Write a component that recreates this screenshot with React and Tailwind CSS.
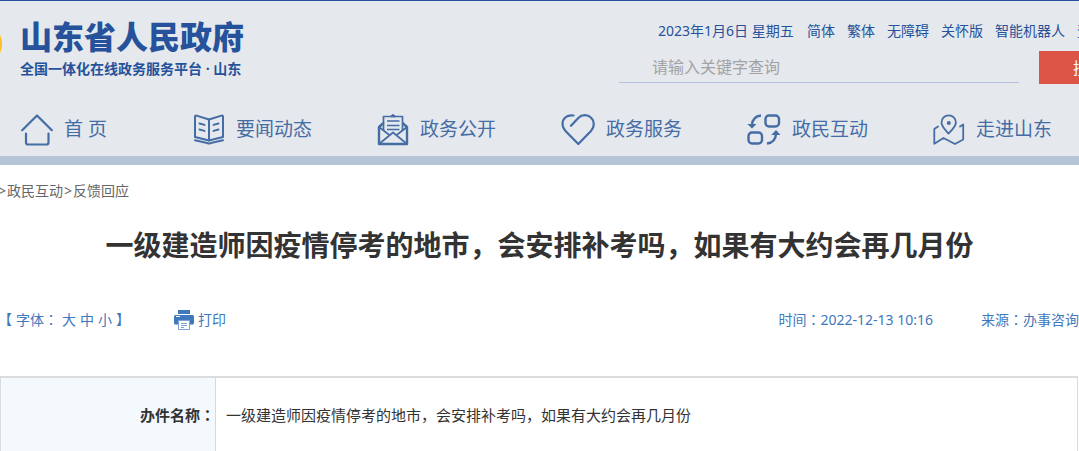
import React from 'react';

function HomeIcon() {
  return (
    <svg width="32" height="32" viewBox="0 0 32 32" fill="none" stroke="currentColor" strokeWidth="2.2" strokeLinecap="round" strokeLinejoin="round">
      <path d="M1.2 16.2 16 1.5l14.8 14.7" />
      <path d="M5 19.5v9a2 2 0 0 0 2 2h18.5a2 2 0 0 0 2-2v-9" />
    </svg>
  );
}

function BookIcon() {
  return (
    <svg width="32" height="32" viewBox="0 0 32 32" fill="none" stroke="currentColor" strokeWidth="2" strokeLinecap="round" strokeLinejoin="round">
      <path d="M16 5.5 3.5 1.6Q2 1.3 2 3v20l14 3.5L30 23V3q0-1.7-1.5-1.4Z" />
      <path d="M16 5.5v21M2 26.2l11 2.5q3 1.5 6 0l11-2.5" />
      <path d="m6.5 9.5 5 1.4M6.5 15.5l5 1.4M25.5 9.5l-5 1.4M25.5 15.5l-5 1.4" />
    </svg>
  );
}

function LetterIcon() {
  return (
    <svg width="32" height="32" viewBox="0 0 32 32" fill="none" stroke="currentColor" strokeWidth="1.7" strokeLinejoin="round">
      <path d="M6.5 17V2.5h19V17" />
      <path d="M14 2.5h4L16 .8Z" fill="currentColor" />
      <path d="M6.5 9 2 13v17h28V13l-4.500-4" strokeWidth="2.4" />
      <path d="m2 13 11 8.5M30 13l-11 8.5M2 30l14-11.5L30 30" />
      <path d="M10 7h12.5M10 11.5h12.5M10 15.5h12.5" strokeWidth="1.4" />
    </svg>
  );
}

function HeartIcon() {
  return (
    <svg width="34" height="32" viewBox="0 0 34 32" fill="none" stroke="currentColor" strokeWidth="2.2" strokeLinecap="round" strokeLinejoin="round">
      <path d="M12.5 1.5C6 .3 1.5 4.5 1.5 10c0 3 1.3 5.2 3 7L17.3 30 30 17c1.7-1.8 2.8-4 2.8-7 0-5-4-8.800-9-8.800-3 0-5 1.3-6.5 2.8L10 11.8" />
    </svg>
  );
}

function ExchangeIcon() {
  return (
    <svg width="34" height="32" viewBox="0 0 34 32" fill="none" stroke="currentColor" strokeWidth="2.4">
      <rect x="18.5" y="1.5" width="13.5" height="11" rx="3.5" />
      <rect x="1.5" y="18.5" width="13.5" height="11" rx="3.5" />
      <path d="M14 1.5Q5.5 2.5 5 11" />
      <path d="M20 29.5Q28.5 28.5 29 20" />
      <path d="M.3 10h9.2L5 14.5ZM24.3 21h9.2L29 16Z" fill="currentColor" stroke="none" />
    </svg>
  );
}

function MapIcon() {
  return (
    <svg width="32" height="32" viewBox="0 0 32 32" fill="none" stroke="currentColor" strokeWidth="1.8" strokeLinecap="round" strokeLinejoin="round">
      <path d="M15.500 19.500C12 15.500 8.500 12.500 8.500 8.500a7.200 7.200 0 0 1 14.400 0C22.900 12.500 19.500 15.500 15.500 19.500Z" />
      <circle cx="15.8" cy="9" r="2" fill="currentColor" stroke="none" />
      <path d="M5 12.5 1.3 15v14.8l9.2-5.8 11.5 6 8.2-4.5V10.5l-3.200 2" />
    </svg>
  );
}

function PrinterIcon() {
  return (
    <svg width="20" height="20" viewBox="0 0 20 20">
      <path d="M4 0h12v4H4z" fill="#3f78bd" />
      <rect y="5" width="20" height="9.5" rx="1.5" fill="#3f78bd" />
      <path d="M2 6.5h4" stroke="#fff" />
      <path d="M4.5 10.5h11v9h-11z" fill="#fff" stroke="#7ba3d6" />
      <path d="M7 13.5h6M7 15.5h6M7 17.5h3" stroke="#7ba3d6" />
    </svg>
  );
}

const navItems = [
  { label: '首 页', icon: HomeIcon },
  { label: '要闻动态', icon: BookIcon },
  { label: '政务公开', icon: LetterIcon },
  { label: '政务服务', icon: HeartIcon },
  { label: '政民互动', icon: ExchangeIcon },
  { label: '走进山东', icon: MapIcon },
];

const topLinks = ['简体', '繁体', '无障碍', '关怀版', '智能机器人', '登录'];

function Colon() {
  return <span className="font-['Noto_Sans_CJK_TC',sans-serif]">：</span>;
}

function Header() {
  return (
    <header className="border-t border-t-[#25529a] border-b-9 border-b-[#b5c4d6] bg-[#e5e8ed]">
      <div className="flex h-[102px] justify-between">
        <a href="#" className="flex text-[#25529a]">
          <svg width="20" height="101" viewBox="0 0 20 101" className="shrink-0">
            <ellipse cx="-13" cy="43" rx="15" ry="18" fill="#f9bf2c" />
          </svg>
          <span className="flex flex-col pt-4">
            <strong className="text-[32px] leading-10 font-black whitespace-nowrap">山东省人民政府</strong>
            <span className="text-sm leading-6 font-bold whitespace-nowrap">全国一体化在线政务服务平台 · 山东</span>
          </span>
        </a>

        <div className="w-[460px] shrink-0">
          <div className="flex gap-3 pt-5 pl-[39px] text-sm whitespace-nowrap text-[#25529a]">
            <span className="w-[137px] shrink-0">2023年1月6日 星期五</span>
            {topLinks.map((link) => (
              <a key={link} href="#" className="shrink-0">{link}</a>
            ))}
          </div>
          <form className="mt-[10px] flex gap-5" onSubmit={(e) => e.preventDefault()}>
            <input
              type="text"
              aria-label="请输入关键字查询"
              placeholder="请输入关键字查询"
              className="h-8 w-[400px] shrink-0 border-b border-[#b3c3de] pl-[33px] text-base outline-none placeholder:text-[#a3a3a3]"
            />
            <button type="submit" className="h-[33px] w-[100px] shrink-0 bg-[#db5445] text-base text-white">
              搜索
            </button>
          </form>
        </div>
      </div>

      <nav className="flex h-[53px] items-center justify-between pr-[27px] pl-[21px] text-[19px] text-[#456da5]">
        {navItems.map(({ label, icon: Icon }) => (
          <a key={label} href="#" className="flex min-w-[107px] items-center gap-[11px] whitespace-nowrap">
            <Icon />
            {label}
          </a>
        ))}
      </nav>
    </header>
  );
}

export default function App() {
  return (
    <div className="min-h-screen overflow-hidden bg-white font-['Noto_Sans','Noto_Sans_CJK_SC',sans-serif]">
      <Header />

      <main>
        <div className="flex gap-px pt-4 text-sm text-[#666]">
          <span className="-ml-[2px]">&gt;</span>
          <a href="#">政民互动</a>
          <span>&gt;</span>
          <a href="#">反馈回应</a>
        </div>

        <h1 className="pt-6 text-center text-[28px] leading-10 font-bold text-[#333]">
          一级建造师因疫情停考的地市，会安排补考吗，如果有大约会再几月份
        </h1>

        <div className="flex items-center pt-11 text-sm leading-5 whitespace-nowrap text-[#3f78bd]">
          <div className="flex w-[174px] gap-1">
            <span className="-ml-[2px]">【</span>
            <span>字体<Colon /></span>
            <button type="button">大</button>
            <button type="button">中</button>
            <button type="button">小</button>
            <span>】</span>
          </div>
          <button type="button" className="flex items-center gap-1">
            <PrinterIcon />
            打印
          </button>
          <div className="ml-auto flex gap-12">
            <span>时间<Colon />2022-12-13 10:16</span>
            <span>来源<Colon />办事咨询</span>
          </div>
        </div>

        <div className="pt-[46px] pr-px">
          <table className="w-full border-separate border-spacing-0 border-x border-t-2 border-[#dcdcdc] text-[15px] text-[#333]">
            <tbody>
              <tr>
                <th scope="row" className="h-[75px] w-[215px] border-r border-[#d3d9de] bg-[#f4f9fe] text-right font-bold">
                  办件名称<Colon />
                </th>
                <td className="pl-[10px]">一级建造师因疫情停考的地市，会安排补考吗，如果有大约会再几月份</td>
              </tr>
            </tbody>
          </table>
        </div>
      </main>
    </div>
  );
}
